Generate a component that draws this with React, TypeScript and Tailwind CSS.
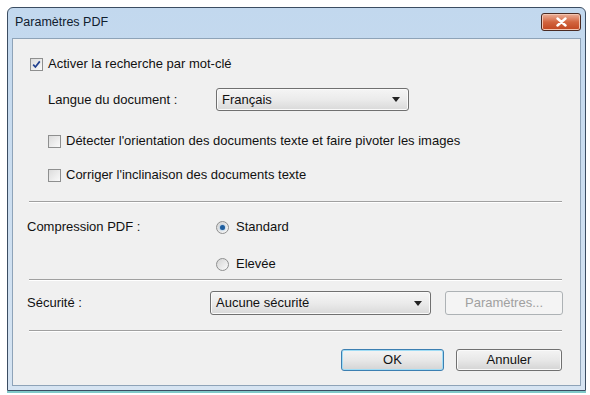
import React from 'react';

const font = { fontFamily: '"Liberation Sans", Arial, sans-serif' };

const Checkbox: React.FC<{ checked?: boolean }> = ({ checked }) => (
  <div className="w-[13px] h-[13px] border border-[#8e8f8f] bg-gradient-to-br from-[#dcdcdc] to-[#fafafa] flex items-center justify-center shrink-0">
    {checked && (
      <svg width="9" height="9" viewBox="0 0 9 9">
        <path d="M1.2 4.6 L3.4 7 L7.8 1.4" fill="none" stroke="#21418f" strokeWidth="1.7" />
      </svg>
    )}
  </div>
);

const Radio: React.FC<{ checked?: boolean }> = ({ checked }) => (
  <div className="w-[13px] h-[13px] rounded-full border border-[#8e8f8f] bg-gradient-to-br from-[#d4d4d4] to-[#fbfbfb] flex items-center justify-center shrink-0">
    {checked && <div className="w-[5px] h-[5px] rounded-full bg-[#1f5e9e] shadow-[0_0_2px_#5aa0e0]" />}
  </div>
);

const Select: React.FC<{ label: string; className: string }> = ({ label, className }) => (
  <div
    className={`${className} flex items-center justify-between border border-[#707070] rounded-[3px] bg-gradient-to-b from-[#f5f5f5] via-[#ebebeb] to-[#d9d9d9] pl-[5px] pr-[8px] shadow-[inset_0_0_0_1px_#fafafa]`}
  >
    <span className="text-[#111]">{label}</span>
    <svg width="8" height="5" viewBox="0 0 8 5">
      <path d="M0 0 H8 L4 5 Z" fill="#222" />
    </svg>
  </div>
);

const Separator: React.FC<{ className?: string }> = ({ className = '' }) => (
  <div className={`ml-[16px] mr-[18px] border-t border-[#a0a0a0] border-b border-b-white ${className}`} />
);

const Button: React.FC<{ label: string; focused?: boolean; disabled?: boolean; className?: string }> = ({
  label,
  focused,
  disabled,
  className = '',
}) => (
  <div
    className={`${className} flex items-center justify-center rounded-[3px] ${
      disabled
        ? 'border border-[#adb2b5] bg-[#f4f4f4] text-[#a0a0a0]'
        : focused
        ? 'border border-[#3c7fb1] bg-gradient-to-b from-[#f4f4f4] via-[#e8e8e8] to-[#d4d4d4] text-[#111] shadow-[inset_0_0_0_1px_#9fdcf5]'
        : 'border border-[#707070] bg-gradient-to-b from-[#f4f4f4] via-[#e8e8e8] to-[#d4d4d4] text-[#111] shadow-[inset_0_0_0_1px_#fafafa]'
    }`}
  >
    {label}
  </div>
);

const App: React.FC = () => {
  return (
    <div className="w-[590px] h-[395px] bg-white pt-[7px] pl-[7px] overflow-hidden" style={font}>
      <div className="w-[579px] h-[384px] border border-[#3b4d62] rounded-t-[6px] bg-gradient-to-b from-[#c2d8ee] to-[#d6e4f2] flex flex-col px-[4px] pb-[4px] shadow-[0_2px_0_#7fc9c9]">
        {/* Title bar */}
        <div className="h-[30px] flex items-center justify-between pl-[3px] shrink-0">
          <span className="text-[12.5px] text-[#10202e] -mt-[1px]">Paramètres PDF</span>
          <div className="w-[40px] h-[18px] -mt-[3px] rounded-[3px] border border-[#4a2a22] bg-gradient-to-b from-[#eab09a] via-[#d2653f] to-[#c0451f] flex items-center justify-center shadow-[inset_0_0_0_1px_#f3c4b0]">
            <svg width="11" height="10" viewBox="0 0 11 10">
              <path d="M1.5 1.5 L9.5 8.5 M9.5 1.5 L1.5 8.5" stroke="#fff" strokeWidth="2.4" strokeLinecap="round" />
            </svg>
          </div>
        </div>

        {/* Client area */}
        <div className="flex-1 bg-[#f0f0f0] border border-[#8ea3b8] text-[13px] text-[#111] flex flex-col">
          <div className="mt-[17px] h-[16px] flex items-center gap-[5px] pl-[17px]">
            <Checkbox checked />
            <span>Activer la recherche par mot-clé</span>
          </div>

          <div className="mt-[16px] flex items-center pl-[35px]">
            <span className="w-[168px]">Langue du document :</span>
            <Select label="Français" className="w-[193px] h-[23px]" />
          </div>

          <div className="mt-[22px] h-[16px] flex items-center gap-[5px] pl-[35px]">
            <Checkbox />
            <span>Détecter l'orientation des documents texte et faire pivoter les images</span>
          </div>

          <div className="mt-[18px] h-[16px] flex items-center gap-[5px] pl-[35px]">
            <Checkbox />
            <span>Corriger l'inclinaison des documents texte</span>
          </div>

          <Separator className="mt-[18px]" />

          <div className="mt-[16px] h-[16px] flex items-center pl-[14px]">
            <span className="w-[189px]">Compression PDF :</span>
            <div className="flex items-center gap-[7px]">
              <Radio checked />
              <span>Standard</span>
            </div>
          </div>

          <div className="mt-[21px] h-[16px] flex items-center pl-[203px] gap-[7px]">
            <Radio />
            <span>Elevée</span>
          </div>

          <Separator className="mt-[7px]" />

          <div className="mt-[10px] flex items-center pl-[14px]">
            <span className="w-[183px]">Sécurité :</span>
            <Select label="Aucune sécurité" className="w-[221px] h-[24px]" />
            <Button label="Paramètres..." disabled className="ml-[14px] w-[118px] h-[24px]" />
          </div>

          <Separator className="mt-[15px]" />

          <div className="mt-[17px] flex justify-end gap-[12px] pr-[18px]">
            <Button label="OK" focused className="w-[103px] h-[22px]" />
            <Button label="Annuler" className="w-[106px] h-[22px]" />
          </div>
        </div>
      </div>
    </div>
  );
};

export default App;
